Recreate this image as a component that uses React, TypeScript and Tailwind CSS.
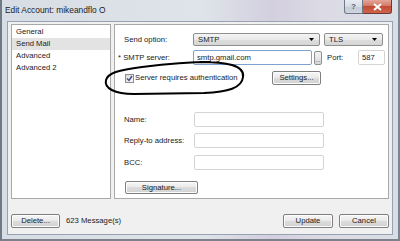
import React from "react";

const font = { fontFamily: '"Liberation Sans", Arial, sans-serif' };

function Btn({ children, w, h = 14 }: { children: React.ReactNode; w: number; h?: number }) {
  return (
    <div
      className="flex items-center justify-center rounded-[2px] border border-[#7f7f7f] bg-[linear-gradient(#f6f6f6_0%,#ebebeb_45%,#dcdcdc_50%,#d2d2d2_100%)] text-[7.7px] text-[#1a1a1a] shadow-[inset_0_0_0_1px_#fcfcfc]"
      style={{ width: w, height: h }}
    >
      {children}
    </div>
  );
}

function Select({ value, w }: { value: string; w: number }) {
  return (
    <div
      className="flex h-[13px] items-center justify-between rounded-[2px] border border-[#8e8f8f] bg-[linear-gradient(#f4f4f4_0%,#e9e9e9_50%,#dedede_51%,#d6d6d6_100%)] pl-[4px] pr-[5px] text-[7.7px] text-[#1a1a1a]"
      style={{ width: w }}
    >
      <span>{value}</span>
      <svg width="5" height="3" viewBox="0 0 5 3">
        <path d="M0 0H5L2.5 3Z" fill="#000" />
      </svg>
    </div>
  );
}

function Input({ w, h = 15, value, focus }: { w: number; h?: number; value?: string; focus?: boolean }) {
  return (
    <div
      className={
        "flex items-center rounded-[2px] border bg-white pl-[3px] text-[7.7px] text-[#1a1a1a] " +
        (focus ? "border-[#7da2ce]" : "border-[#d4d4d4]")
      }
      style={{ width: w, height: h }}
    >
      {value}
    </div>
  );
}

export default function App() {
  return (
    <div
      className="relative flex h-[241px] w-[400px] flex-col overflow-hidden border-b-[2px] border-l-[2px] border-r-[2px] border-b-[#7c8088] border-l-[#6f7a86] border-r-[#7d8590] bg-[linear-gradient(90deg,#d7dde4_0%,#dfe4ea_50%,#d3cfdf_68%,#dcdbe5_82%,#d9dee5_100%)]"
      style={font}
    >
      {/* title bar */}
      <div className="flex h-[21px] shrink-0 items-center pl-[3px] text-[8.4px] text-[#1b1b1b]">
        Edit Account: mikeandflo O
      </div>
      <div className="absolute right-[6px] top-0 flex">
        <div className="flex h-[14px] w-[19px] items-center justify-center rounded-bl-[3px] border border-t-0 border-[#6e7886] bg-[linear-gradient(#e9edf2_0%,#d6dce4_50%,#c3cbd6_51%,#cfd6df_100%)] text-[8px] font-bold text-[#54606e]">
          ?
        </div>
        <div className="flex h-[14px] w-[29px] items-center justify-center rounded-br-[3px] border border-l-0 border-t-0 border-[#6b3a36] bg-[linear-gradient(#e5a598_0%,#d47868_45%,#c24a35_50%,#d0654a_100%)]">
          <svg width="9" height="8" viewBox="0 0 9 8">
            <path d="M1 1L8 7M8 1L1 7" stroke="#fff" strokeWidth="2" />
          </svg>
        </div>
      </div>

      {/* client */}
      <div className="mx-[5px] mb-[4px] flex flex-1 flex-col border border-[#97a3b2] bg-[#f0f0f0] px-[3px] pt-[2px]">
        <div className="flex h-[175px] gap-[3px]">
          {/* list */}
          <div className="flex w-[100px] flex-col border border-[#a9a9a9] bg-white pt-[1px] text-[7.7px] text-[#1a1a1a]">
            <div className="flex h-[12px] items-center pl-[4px]">General</div>
            <div className="flex h-[12px] items-center bg-[#e3e3e3] pl-[4px]">Send Mail</div>
            <div className="flex h-[12px] items-center pl-[4px]">Advanced</div>
            <div className="flex h-[12px] items-center pl-[4px]">Advanced 2</div>
          </div>

          {/* panel */}
          <div className="flex flex-1 flex-col border border-[#a9a9a9] bg-white pl-[9px] text-[7.7px] text-[#1a1a1a]">
            <div className="mt-[8px] flex items-center">
              <div className="w-[69px]">Send option:</div>
              <Select value="SMTP" w={127} />
              <div className="w-[4px]" />
              <Select value="TLS" w={59} />
            </div>
            <div className="mt-[4px] flex items-center">
              <div className="ml-[-6px] w-[75px]">* SMTP server:</div>
              <Input w={119} h={15} value="smtp.gmail.com" focus />
              <div className="ml-[2px] flex h-[14px] w-[8px] items-end justify-center rounded-[2px] border border-[#8e8f8f] bg-[linear-gradient(#f4f4f4,#d8d8d8)] pb-[1px] text-[6px] leading-none">
                ...
              </div>
              <div className="ml-[5px] w-[31px]">Port:</div>
              <Input w={27} h={15} value="587" />
            </div>
            <div className="mt-[6px] flex items-center">
              <div className="ml-[1px] flex h-[9px] w-[9px] items-center justify-center border border-[#8f8f8f] bg-[linear-gradient(135deg,#dcdcdc,#f7f7f7)]">
                <svg width="7" height="7" viewBox="0 0 7 7">
                  <path d="M1 3.5L3 5.5L6 1" stroke="#3c4f82" strokeWidth="1.4" fill="none" />
                </svg>
              </div>
              <div className="ml-[1px] w-[137px]">Server requires authentication</div>
              <Btn w={49} h={14}>Settings...</Btn>
            </div>
            <div className="mt-[27px] flex items-center">
              <div className="w-[70px]">Name:</div>
              <Input w={130} />
            </div>
            <div className="mt-[6px] flex items-center">
              <div className="w-[70px]">Reply-to address:</div>
              <Input w={130} />
            </div>
            <div className="mt-[7px] flex items-center">
              <div className="w-[70px]">BCC:</div>
              <Input w={130} />
            </div>
            <div className="mt-[11px] flex">
              <div className="ml-[1px]">
                <Btn w={73} h={13}>Signature...</Btn>
              </div>
            </div>
          </div>
        </div>

        {/* bottom row */}
        <div className="flex items-center pt-[15px] text-[7.7px] text-[#1a1a1a]">
          <Btn w={49}>Delete...</Btn>
          <div className="ml-[6px]">623 Message(s)</div>
          <div className="flex-1" />
          <Btn w={50}>Update</Btn>
          <div className="w-[6px]" />
          <Btn w={50}>Cancel</Btn>
        </div>
      </div>

      {/* hand-drawn ellipse */}
      <svg className="pointer-events-none absolute left-0 top-0" width="400" height="241" viewBox="0 0 400 241">
        <path
          d="M198 62 C224 62 243 65 241 77 C240 88 226 92 202 93 L132 94 C112 94 102 88 104 80 C106 73 116 70 140 67 C164 64 186 62 208 62"
          stroke="#000"
          strokeWidth="2"
          fill="none"
          strokeLinecap="round"
        />
      </svg>
    </div>
  );
}
